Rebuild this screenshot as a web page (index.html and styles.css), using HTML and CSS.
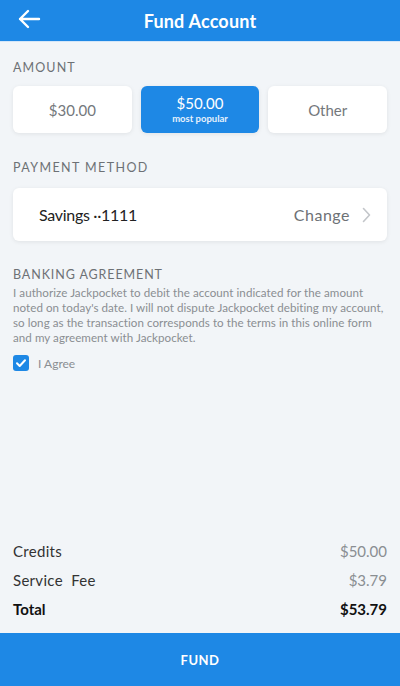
FILE: index.html
```html
<!DOCTYPE html>
<html>
<head>
<meta charset="utf-8">
<link rel="stylesheet" href="styles.css">
</head>
<body>
<div class="app">
  <header class="topbar">
    <svg class="back" width="24" height="20" viewBox="0 0 24 20"><path d="M22 10H3M11 2L3 10l8 8" fill="none" stroke="#fff" stroke-width="2.4" stroke-linecap="round" stroke-linejoin="round"/></svg>
    <h1 class="title">Fund Account</h1>
  </header>
  <main class="content">
    <div class="label label-first">AMOUNT</div>
    <div class="amounts">
      <div class="amt">$30.00</div>
      <div class="amt selected"><span class="amt-main">$50.00</span><span class="amt-sub">most popular</span></div>
      <div class="amt">Other</div>
    </div>
    <div class="label label-pay">PAYMENT METHOD</div>
    <div class="pay">
      <span class="pay-name">Savings ··1111</span>
      <span class="pay-change">Change
        <svg class="chev" width="9" height="16" viewBox="0 0 9 16"><path d="M1.5 1.5L7.5 8l-6 6.5" fill="none" stroke="#c3c6ca" stroke-width="1.6" stroke-linecap="round" stroke-linejoin="round"/></svg>
      </span>
    </div>
    <div class="label label-bank">BANKING AGREEMENT</div>
    <p class="agree-text">I authorize Jackpocket to debit the account indicated for the amount noted on today's date. I will not dispute Jackpocket debiting my account, so long as the transaction corresponds to the terms in this online form and my agreement with Jackpocket.</p>
    <label class="check">
      <span class="box"><svg width="16" height="16" viewBox="0 0 16 16"><path d="M4 8.3l2.7 2.7L12 5.3" fill="none" stroke="#fff" stroke-width="2" stroke-linecap="round" stroke-linejoin="round"/></svg></span>
      <span class="check-label">I Agree</span>
    </label>
  </main>
  <section class="summary">
    <div class="row"><span>Credits</span><span class="val">$50.00</span></div>
    <div class="row"><span>Service&nbsp; Fee</span><span class="val">$3.79</span></div>
    <div class="row total"><span>Total</span><span>$53.79</span></div>
  </section>
  <button class="fund">FUND</button>
</div>
</body>
</html>
```
FILE: styles.css
```css
* { box-sizing: border-box; }
html, body { margin: 0; padding: 0; }
body {
  font-family: "Lato", "Open Sans", sans-serif;
  background: #f2f5f8;
  color: #222;
}
.app {
  height: 686px;
  display: flex;
  flex-direction: column;
}
.topbar {
  height: 42px;
  background: #1e88e5;
  position: relative;
  display: flex;
  align-items: center;
  justify-content: center;
  border-bottom: 1px solid #d4e6f8;
}
.back {
  position: absolute;
  left: 17px;
  top: 9px;
}
.title {
  margin: 0;
  color: #fff;
  font-size: 18px;
  font-weight: 700;
  letter-spacing: 0.2px;
}
.content {
  flex: 1;
  padding: 0 13px;
}
.label {
  font-size: 12.5px;
  letter-spacing: 1.1px;
  color: #6d7175;
  line-height: 16px;
}
.label-first { margin-top: 18px; }
.label-pay { margin-top: 27px; letter-spacing: 1.4px; }
.label-bank { margin-top: 26px; letter-spacing: 0.9px; }
.amounts {
  margin-top: 10px;
  display: flex;
  gap: 9px;
}
.amt {
  flex: 1;
  height: 47px;
  background: #fff;
  border-radius: 6px;
  box-shadow: 0 1px 4px rgba(0,0,0,0.08);
  display: flex;
  flex-direction: column;
  align-items: center;
  justify-content: center;
  font-size: 15px;
  color: #74787c;
}
.amt.selected {
  background: #1e88e5;
  color: #fff;
}
.amt-main { font-size: 15px; line-height: 18px; }
.amt-sub { font-size: 9.5px; font-weight: 700; line-height: 13px; color: #e6f1fc; }
.pay {
  margin-top: 12px;
  height: 53px;
  background: #fff;
  border-radius: 6px;
  box-shadow: 0 1px 4px rgba(0,0,0,0.08);
  display: flex;
  align-items: center;
  justify-content: space-between;
  padding: 0 16px 0 26px;
  font-size: 16px;
}
.pay-name { color: #222; letter-spacing: -0.3px; }
.pay-change {
  color: #6d7175;
  display: flex;
  align-items: center;
  gap: 12px;
  letter-spacing: 0.5px;
}
.agree-text {
  margin: 2px 0 0;
  font-size: 11.6px;
  line-height: 15px;
  color: #8a8e92;
  letter-spacing: 0.05px;
}
.check {
  display: flex;
  align-items: center;
  gap: 9px;
  margin-top: 10px;
}
.box {
  width: 16px;
  height: 16px;
  border-radius: 3px;
  background: #1e88e5;
  display: flex;
}
.check-label {
  font-size: 12px;
  color: #8a8e92;
}
.summary {
  padding: 0 13px 10px;
}
.row {
  display: flex;
  justify-content: space-between;
  font-size: 15px;
  height: 29px;
  align-items: center;
  color: #333;
}
.row > span:first-child { letter-spacing: 0.3px; }
.row .val { color: #8a8e92; }
.row.total { font-weight: 700; color: #111; }
.row.total > span:first-child { letter-spacing: 0; }
.fund {
  height: 53px;
  border: none;
  background: #1e88e5;
  color: #fff;
  font-family: inherit;
  font-size: 13px;
  font-weight: 700;
  letter-spacing: 0.5px;
  width: 100%;
}
```
